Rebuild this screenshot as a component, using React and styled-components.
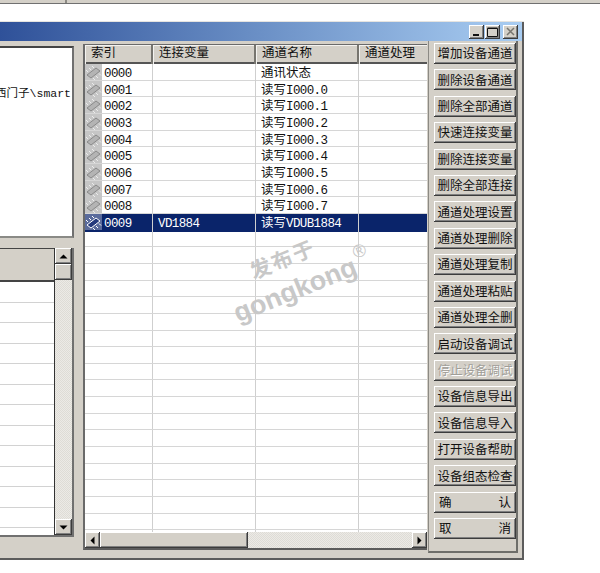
import React from 'react';
import styled, { createGlobalStyle, css } from 'styled-components';

const GlobalStyle = createGlobalStyle`
  html, body {
    margin: 0;
    padding: 0;
    background: #fff;
  }
  body {
    font-family: "Liberation Mono", "Noto Sans CJK SC", monospace;
    font-size: 12px;
    color: #111;
    overflow: hidden;
  }
`;

const raised = css`
  background-color: #d4d0c8;
  box-shadow: inset -1px -1px #3c3c3c, inset 1px 1px #fff, inset -2px -2px #808080;
`;

const dither = css`
  background-color: #eceae6;
  background-image: conic-gradient(#dedcd6 25%, transparent 0 50%, #dedcd6 0 75%, transparent 0);
  background-size: 2px 2px;
`;

const TopStrip = styled.div`
  display: flex;
  height: 3px;
  background: #d4d0c8;
  border-bottom: 1px solid #707070;
`;

const StripCell = styled.div`
  width: 65px;
  border-right: 2px solid #8c8a84;
`;

const Window = styled.div`
  width: 522px;
  height: 536px;
  margin-top: 18px;
  display: flex;
  flex-direction: column;
  background: #d4d0c8;
  border-right: 2px solid #5c5c5c;
  border-bottom: 2px solid #5c5c5c;
  box-shadow: 0 -1px #e6e4e0;
`;

const TitleBar = styled.div`
  flex: none;
  height: 19px;
  display: flex;
  align-items: center;
  justify-content: flex-end;
  padding-right: 4px;
  background: linear-gradient(90deg, #2f5199 0%, #6b90c6 50%, #a9cdf2 100%);
`;

const TitleButton = styled.button`
  ${raised}
  width: 15px;
  height: 14px;
  margin-left: ${(p) => p.$gap}px;
  padding: 0;
  border: 0;
  display: flex;
  align-items: center;
  justify-content: center;
`;

const Body = styled.div`
  flex: 1;
  min-height: 0;
  display: flex;
  align-items: stretch;
`;

const LeftColumn = styled.div`
  flex: none;
  width: 74px;
  padding-top: 5px;
  display: flex;
  flex-direction: column;
`;

const PathBox = styled.div`
  height: 192px;
  background: #fff;
  border-top: 2px solid #444;
  border-right: 2px solid #707070;
  border-bottom: 2px solid #8a8a86;
  padding-top: 38px;
  box-sizing: border-box;
  display: flex;
  justify-content: flex-end;
  padding-right: 1px;
  overflow: hidden;
  white-space: nowrap;
  font-size: 11.5px;
  line-height: 16px;
`;

const TreeBox = styled.div`
  height: 289px;
  margin-top: 10px;
  display: flex;
  background: #fff;
  border-right: 2px solid #707070;
  border-bottom: 2px solid #707070;
  box-sizing: border-box;
  position: relative;
`;

const TreeTable = styled.div`
  flex: 1;
  min-width: 0;
  overflow: hidden;
  border-right: 1px solid #333;
`;

const TreeHeader = styled.div`
  height: 31px;
  background: #d4d0c8;
  border-top: 1px solid #444;
  border-bottom: 2px solid #444;
`;

const TreeRow = styled.div`
  height: 19.5px;
  border-bottom: 1px solid #d2d2d2;
  background: #fff;
`;

const VScroll = styled.div`
  flex: none;
  width: 17px;
  display: flex;
  flex-direction: column;
  ${dither}
`;

const ScrollButton = styled.div`
  ${raised}
  flex: none;
  width: ${(p) => p.$w}px;
  height: ${(p) => p.$h}px;
  display: flex;
  align-items: center;
  justify-content: center;
`;

const VThumb = styled.div`
  ${raised}
  flex: none;
  height: 16px;
`;

const VSpacer = styled.div`
  flex: 1;
`;

const Arrow = styled.svg`
  width: 9px;
  height: 9px;
  display: block;
`;

const ListPanel = styled.div`
  flex: none;
  width: 344px;
  height: 506px;
  margin: 3px 1px 0 9px;
  box-sizing: border-box;
  display: flex;
  flex-direction: column;
  background: #fff;
  border-left: 2px solid #6a6a6a;
  border-top: 1px solid #6a6a6a;
  border-bottom: 2px solid #5c5c5c;
  position: relative;
  overflow: hidden;
`;

const HeaderRow = styled.div`
  flex: none;
  display: grid;
  grid-template-columns: 68px 103px 103px 68px;
  height: 17px;
  background: #d4d0c8;
  border-bottom: 2px solid #555;
`;

const HeaderCell = styled.div`
  padding-left: 6px;
  font-size: 12.5px;
  line-height: 19px;
  border-right: 2px solid #77756f;
  box-shadow: inset 1px 1px #f4f3f0;
  &:last-child {
    border-right: 0;
  }
`;

const Rows = styled.div`
  flex: 1;
  min-height: 0;
  overflow: hidden;
`;

const Row = styled.div`
  display: grid;
  grid-template-columns: 68px 103px 103px 68px;
  height: 16.67px;
  line-height: 16px;
  box-sizing: border-box;
  border-bottom: 1px solid #d6d6d6;
  font-size: 12.5px;
  letter-spacing: -0.6px;
  white-space: nowrap;
  color: ${(p) => (p.$selected ? '#fff' : '#111')};
`;

const Cell = styled.div`
  display: flex;
  align-items: center;
  min-width: 0;
  box-sizing: border-box;
  padding-left: ${(p) => (p.$icon ? 0 : 5)}px;
  padding-top: ${(p) => (p.$icon ? 0 : 2)}px;
  background: ${(p) => (p.$selected ? '#0a246a' : 'transparent')};
  border-right: 1px solid #cfcfcf;
  &:last-child {
    border-right: 0;
  }
`;

const ChipSlot = styled.span`
  flex: none;
  width: 17px;
  height: 100%;
  margin-right: 2px;
`;

const IdText = styled.span`
  padding-top: 2px;
`;

const Han = styled.span`
  letter-spacing: 0;
`;

const HScroll = styled.div`
  flex: none;
  height: 16px;
  display: flex;
  ${dither}
`;

const HThumb = styled.div`
  ${raised}
  flex: none;
  width: 148px;
`;

const ButtonPanel = styled.div`
  flex: none;
  width: 90px;
  height: 512px;
  padding: 2px 0 0 5px;
  box-sizing: border-box;
  display: flex;
  flex-direction: column;
  gap: 5.4px;
  border-left: 1px solid #8c8a84;
  border-right: 2px solid #6e6e6a;
  border-bottom: 2px solid #6e6e6a;
`;

const ActionButton = styled.button`
  ${raised}
  flex: none;
  height: 21px;
  width: 82px;
  padding: 0 5px;
  border: 0;
  display: flex;
  align-items: center;
  justify-content: ${(p) => (p.$split ? 'space-between' : 'center')};
  font-family: "Noto Sans CJK SC", sans-serif;
  font-size: 12.5px;
  line-height: 1;
  white-space: nowrap;
  color: ${(p) => (p.disabled ? '#a09e98' : '#111')};
  text-shadow: ${(p) => (p.disabled ? '1px 1px #fff' : 'none')};
`;

const Watermark = styled.div`
  position: absolute;
  left: 124px;
  top: 200px;
  width: 160px;
  transform: rotate(-22deg);
  text-align: center;
  color: #c8c8c8;
  font-family: "Liberation Sans", "Noto Sans CJK SC", sans-serif;
  pointer-events: none;
`;

const MarkTop = styled.div`
  font-family: "Noto Sans CJK SC", sans-serif;
  font-size: 21px;
  font-weight: 700;
  line-height: 24px;
  letter-spacing: 2px;
`;

const MarkBottom = styled.div`
  margin-top: 8px;
  font-size: 27px;
  font-weight: 700;
  line-height: 28px;
`;

const MarkReg = styled.span`
  position: absolute;
  right: -1px;
  top: 26px;
  font-size: 18px;
  line-height: 16px;
  font-weight: 400;
`;

const Chip = ({ selected }) => {
  const ink = selected ? '#fff' : '#8a8a8a';
  return (
    <svg width="17" height="16" viewBox="0 0 17 16" style={{ display: 'block' }}>
      <rect width="17" height="16" fill={selected ? '#5a6b9c' : '#c6c6c6'} />
      <path d="M2 11 L11 4 L15 7 L6 14 Z" fill={selected ? '#24397c' : '#b4b4b4'} stroke={ink} strokeWidth="1" />
      <path d="M3 8 L1 6 M6 6 L4 4 M9 4 L7 2 M8 14 L10 16 M11 12 L13 14 M14 9.5 L16 11.5" stroke={selected ? '#fff' : '#ececec'} strokeWidth="1" />
    </svg>
  );
};

const channels = [
  { id: '0000', variable: '', han: '通讯状态', name: '' },
  { id: '0001', variable: '', han: '读写', name: 'I000.0' },
  { id: '0002', variable: '', han: '读写', name: 'I000.1' },
  { id: '0003', variable: '', han: '读写', name: 'I000.2' },
  { id: '0004', variable: '', han: '读写', name: 'I000.3' },
  { id: '0005', variable: '', han: '读写', name: 'I000.4' },
  { id: '0006', variable: '', han: '读写', name: 'I000.5' },
  { id: '0007', variable: '', han: '读写', name: 'I000.6' },
  { id: '0008', variable: '', han: '读写', name: 'I000.7' },
  { id: '0009', variable: 'VD1884', han: '读写', name: 'VDUB1884', selected: true },
];

const buttons = [
  '增加设备通道', '删除设备通道', '删除全部通道', '快速连接变量', '删除连接变量',
  '删除全部连接', '通道处理设置', '通道处理删除', '通道处理复制', '通道处理粘贴',
  '通道处理全删', '启动设备调试', '停止设备调试', '设备信息导出', '设备信息导入',
  '打开设备帮助', '设备组态检查',
];

const emptyRows = Array.from({ length: 19 });
const treeRows = Array.from({ length: 12 });

const App = () => (
  <>
    <GlobalStyle />
    <TopStrip>
      <StripCell />
    </TopStrip>
    <Window>
      <TitleBar>
        <TitleButton $gap={0} aria-label="最小化">
          <svg width="9" height="9" viewBox="0 0 9 9"><rect x="1" y="7" width="6" height="2" fill="#111" /></svg>
        </TitleButton>
        <TitleButton $gap={1} aria-label="最大化">
          <svg width="11" height="10" viewBox="0 0 11 10"><path d="M0.5 1.5H10.5V9.5H0.5Z M0.5 1H10.5" fill="none" stroke="#111" /></svg>
        </TitleButton>
        <TitleButton $gap={3} aria-label="关闭">
          <svg width="9" height="9" viewBox="0 0 9 9"><path d="M1 1L8 8M8 1L1 8" stroke="#77756f" strokeWidth="1.5" /></svg>
        </TitleButton>
      </TitleBar>
      <Body>
        <LeftColumn>
          <PathBox>西门子\smart</PathBox>
          <TreeBox>
            <TreeTable>
              <TreeHeader />
              {treeRows.map((_, i) => <TreeRow key={i} />)}
            </TreeTable>
            <VScroll>
              <ScrollButton $w={17} $h={16}>
                <Arrow viewBox="0 0 9 9"><path d="M0.5 6.5H8.5L4.5 2.5Z" fill="#000" /></Arrow>
              </ScrollButton>
              <VThumb />
              <VSpacer />
              <ScrollButton $w={17} $h={16}>
                <Arrow viewBox="0 0 9 9"><path d="M0.5 2.5H8.5L4.5 6.5Z" fill="#000" /></Arrow>
              </ScrollButton>
            </VScroll>
          </TreeBox>
        </LeftColumn>
        <ListPanel>
          <HeaderRow>
            <HeaderCell>索引</HeaderCell>
            <HeaderCell>连接变量</HeaderCell>
            <HeaderCell>通道名称</HeaderCell>
            <HeaderCell>通道处理</HeaderCell>
          </HeaderRow>
          <Rows>
            {channels.map((c) => (
              <Row key={c.id} $selected={c.selected}>
                <Cell $icon $selected={c.selected}>
                  <ChipSlot><Chip selected={c.selected} /></ChipSlot>
                  <IdText>{c.id}</IdText>
                </Cell>
                <Cell $selected={c.selected}>{c.variable}</Cell>
                <Cell $selected={c.selected}><Han>{c.han}</Han>{c.name}</Cell>
                <Cell $selected={c.selected} />
              </Row>
            ))}
            {emptyRows.map((_, i) => (
              <Row key={i}>
                <Cell />
                <Cell />
                <Cell />
                <Cell />
              </Row>
            ))}
          </Rows>
          <HScroll>
            <ScrollButton $w={15} $h={16}>
              <Arrow viewBox="0 0 9 9"><path d="M6.5 0.5V8.5L2.5 4.5Z" fill="#000" /></Arrow>
            </ScrollButton>
            <HThumb />
            <VSpacer />
            <ScrollButton $w={15} $h={16}>
              <Arrow viewBox="0 0 9 9"><path d="M2.5 0.5V8.5L6.5 4.5Z" fill="#000" /></Arrow>
            </ScrollButton>
          </HScroll>
          <Watermark>
            <MarkTop>发布于</MarkTop>
            <MarkBottom>gongkong<MarkReg>®</MarkReg></MarkBottom>
          </Watermark>
        </ListPanel>
        <ButtonPanel>
          {buttons.map((label) => (
            <ActionButton key={label} disabled={label === '停止设备调试'}>{label}</ActionButton>
          ))}
          <ActionButton $split><span>确</span><span>认</span></ActionButton>
          <ActionButton $split><span>取</span><span>消</span></ActionButton>
        </ButtonPanel>
      </Body>
    </Window>
  </>
);

export default App;
